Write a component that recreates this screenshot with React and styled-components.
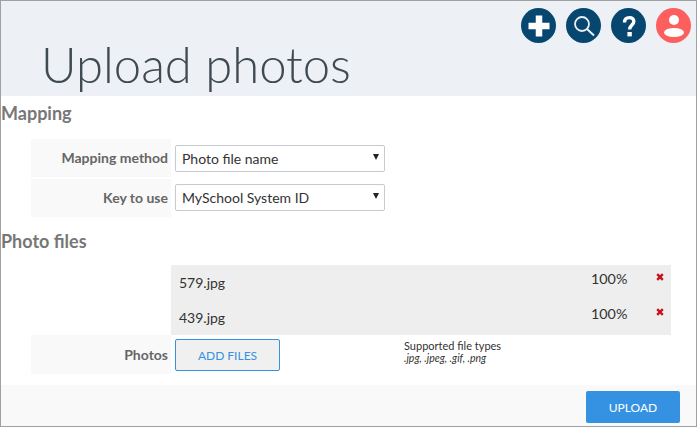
import React from 'react';
import styled, { createGlobalStyle } from 'styled-components';

const Global = createGlobalStyle`
  html, body { margin: 0; padding: 0; background: #fff; }
  body { font-family: Lato, "Open Sans", sans-serif; }
`;

const Frame = styled.div`
  box-sizing: border-box;
  width: 697px;
  height: 427px;
  border: 1px solid #a0a0a0;
  display: flex;
  flex-direction: column;
  overflow: hidden;
`;

const Header = styled.header`
  height: 95px;
  background: #edf1f5;
  flex: none;
  position: relative;
  padding-left: 40px;
`;

const Title = styled.h1`
  margin: 0;
  padding-top: 33px;
  font-size: 49px;
  line-height: 60px;
  font-weight: 300;
  color: #3f4a52;
`;

const IconBar = styled.div`
  position: absolute;
  top: 7px;
  right: 5px;
  display: flex;
  gap: 10px;
`;

const IconCircle = styled.div`
  width: 35px;
  height: 35px;
  border-radius: 50%;
  background: ${(p) => p.$bg};
  display: flex;
  align-items: center;
  justify-content: center;
`;

const Main = styled.main`
  flex: 1;
  display: flex;
  flex-direction: column;
`;

const Heading = styled.h2`
  margin: 0;
  box-sizing: border-box;
  height: ${(p) => p.$h}px;
  padding-top: ${(p) => p.$pt || 0}px;
  font-size: 18px;
  line-height: 34px;
  font-weight: 700;
  color: #777;
`;

const Row = styled.div`
  display: flex;
  height: ${(p) => p.$h}px;
  margin-left: 30px;
  margin-bottom: ${(p) => p.$mb || 0}px;
`;

const Label = styled.div`
  width: 140px;
  flex: none;
  box-sizing: border-box;
  padding-right: 3px;
  background: #f9f9f9;
  text-align: right;
  font-size: 14px;
  font-weight: 700;
  color: #666;
  line-height: ${(p) => p.$lh}px;
`;

const SelectBox = styled.div`
  box-sizing: border-box;
  width: 210px;
  height: 27px;
  margin: ${(p) => p.$mt}px 0 0 4px;
  border: 1px solid #c5cbd0;
  border-radius: 2px;
  background: #fff;
  padding-left: 6px;
  padding-right: 5px;
  display: flex;
  align-items: center;
  justify-content: space-between;
  font-size: 14px;
  color: #333;
`;

const Caret = styled.span`
  width: 0;
  height: 0;
  border-left: 3.5px solid transparent;
  border-right: 3.5px solid transparent;
  border-top: 6px solid #222;
  margin-top: -4px;
`;

const FileList = styled.div`
  margin-left: 170px;
  width: 500px;
  height: 70px;
  background: #eee;
  flex: none;
`;

const FileRow = styled.div`
  height: 35px;
  display: flex;
  position: relative;
  font-size: 14px;
  color: #333;
`;

const FileName = styled.span`
  margin-left: 8px;
  flex: 1;
  line-height: 36px;
`;

const Percent = styled.span`
  line-height: 28px;
  width: 65px;
  font-size: 14.3px;
`;

const Remove = styled.span`
  width: 12px;
  margin-right: 3px;
  padding-top: 8px;
  display: flex;
  align-items: flex-start;
`;

const AddButton = styled.button`
  box-sizing: border-box;
  width: 105px;
  height: 32px;
  margin: 4px 0 0 4px;
  border: 1px solid #3592e2;
  border-radius: 2px;
  background: #f0f0f0;
  color: #3592e2;
  font-family: inherit;
  font-size: 12px;
  padding: 0;
`;

const Hint = styled.div`
  margin: 5px 0 0 124px;
  font-size: 11px;
  line-height: 12px;
  color: #333;
`;

const HintTypes = styled.div`
  font-style: italic;
  font-size: 10.5px;
`;

const Footer = styled.footer`
  margin-top: auto;
  height: 41px;
  background: #f9f9f9;
  display: flex;
  justify-content: flex-end;
  padding: 6px 16px 0 0;
  box-sizing: border-box;
`;

const UploadButton = styled.button`
  width: 94px;
  height: 32px;
  border: none;
  border-radius: 2px;
  background: #3592e2;
  color: #fff;
  font-family: inherit;
  font-size: 12px;
  padding: 0;
`;

const X = () => (
  <svg width="8" height="8" viewBox="0 0 8 8">
    <path d="M1.2 1.2 L6.8 6.8 M6.8 1.2 L1.2 6.8" stroke="#c8101c" strokeWidth="2.4" fill="none" />
  </svg>
);

const files = ['579.jpg', '439.jpg'];

export default function App() {
  return (
    <Frame>
      <Global />
      <Header>
        <Title>Upload photos</Title>
        <IconBar>
          <IconCircle $bg="#07476f">
            <svg width="24" height="24" viewBox="0 0 24 24">
              <path d="M12 1.5 V22.5 M1.5 12 H22.5" stroke="#fff" strokeWidth="6.5" fill="none" />
            </svg>
          </IconCircle>
          <IconCircle $bg="#07476f">
            <svg width="24" height="24" viewBox="0 0 24 24">
              <circle cx="10" cy="10" r="7" stroke="#eaf0f4" strokeWidth="1.8" fill="none" />
              <path d="M15 15 L22 21.5" stroke="#eaf0f4" strokeWidth="2" fill="none" />
            </svg>
          </IconCircle>
          <IconCircle $bg="#07476f">
            <svg width="24" height="28" viewBox="0 0 24 28">
              <path d="M7.5 10.5 C7.5 7 9.5 5.6 12.2 5.6 C15 5.6 16.8 7.2 16.8 9.6 C16.8 12.8 12.6 13.2 12.6 17.5" stroke="#fff" strokeWidth="3.4" fill="none" />
              <rect x="10.4" y="20" width="4.4" height="4.4" fill="#fff" />
            </svg>
          </IconCircle>
          <IconCircle $bg="#fd5f5f">
            <svg width="28" height="28" viewBox="0 0 28 28">
              <circle cx="14" cy="8" r="5" fill="#fff" />
              <ellipse cx="14" cy="20.5" rx="10" ry="4.6" fill="#fff" />
            </svg>
          </IconCircle>
        </IconBar>
      </Header>
      <Main>
        <Heading $h={43}>Mapping</Heading>
        <Row $h={38} $mb={2}>
          <Label $lh={38}>Mapping method</Label>
          <SelectBox $mt={6}>Photo file name<Caret /></SelectBox>
        </Row>
        <Row $h={38}>
          <Label $lh={38}>Key to use</Label>
          <SelectBox $mt={5}>MySchool System ID<Caret /></SelectBox>
        </Row>
        <Heading $h={48} $pt={7}>Photo files</Heading>
        <FileList>
          {files.map((f) => (
            <FileRow key={f}>
              <FileName>{f}</FileName>
              <Percent>100%</Percent>
              <Remove><X /></Remove>
            </FileRow>
          ))}
        </FileList>
        <Row $h={39}>
          <Label $lh={39}>Photos</Label>
          <AddButton>ADD FILES</AddButton>
          <Hint>
            Supported file types
            <HintTypes>.jpg, .jpeg, .gif, .png</HintTypes>
          </Hint>
        </Row>
      </Main>
      <Footer>
        <UploadButton>UPLOAD</UploadButton>
      </Footer>
    </Frame>
  );
}
